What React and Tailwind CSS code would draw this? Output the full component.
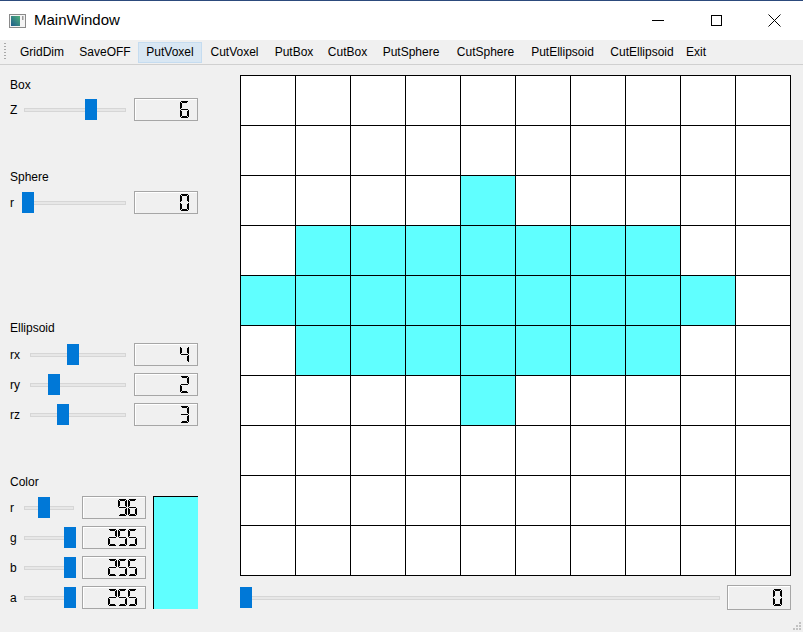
import React from 'react';

// outer line + shorter inner line per segment, gives the thin outlined LCD look
const SEGS = {
  a: ['M1 0.5 H8', 'M2 1.5 H7'],
  b: ['M8.5 1 V8', 'M7.5 2 V7'],
  c: ['M8.5 9 V16', 'M7.5 10 V15'],
  d: ['M1 16.5 H8', 'M2 15.5 H7'],
  e: ['M0.5 9 V16', 'M1.5 10 V15'],
  f: ['M0.5 1 V8', 'M1.5 2 V7'],
  g: ['M1 8.5 H8'],
};

const DIGITS = {
  '0': 'abcdef',
  '1': 'bc',
  '2': 'abged',
  '3': 'abgcd',
  '4': 'fgbc',
  '5': 'afgcd',
  '6': 'afgecd',
  '7': 'abc',
  '8': 'abcdefg',
  '9': 'abcdfg',
};

const Digit = ({ ch }) => (
  <svg width="9" height="17" viewBox="0 0 9 17" shapeRendering="crispEdges">
    {DIGITS[ch].split('').map((s) => (
      <path key={s} d={SEGS[s].join(' ')} fill="none" stroke="#000" strokeWidth="1" />
    ))}
  </svg>
);

const Lcd = ({ value, className = 'h-[23px]' }) => (
  <div className={`w-[64px] ${className} flex items-center justify-end gap-[1px] pr-[8px] border border-[#a6a6a6] shadow-[inset_1px_1px_0_#ffffff] bg-[#f0f0f0] shrink-0`}>
    {String(value).split('').map((ch, i) => (
      <Digit key={i} ch={ch} />
    ))}
  </div>
);

const Slider = ({ value, max, width, className = '' }) => {
  const range = width - 12;
  return (
    <div className={`relative h-[21px] flex items-center shrink-0 ${className}`} style={{ width }}>
      <div className="mx-[2px] flex-1 h-[4px] bg-[#e7e7e7] border border-[#d6d6d6]" />
      <div
        className="absolute top-0 w-[12px] h-[21px] bg-[#0078d7]"
        style={{ left: Math.round((value / max) * range) }}
      />
    </div>
  );
};

const Label = ({ children, className = '' }) => (
  <div className={`h-[16px] leading-[16px] text-[12px] text-black ${className}`}>{children}</div>
);

const ParamRow = ({ label, labelW, value, max, sliderW, lcdGap = 'ml-[6px]' }) => (
  <div className="flex items-center h-[23px]">
    <div className="text-[12px] text-black shrink-0" style={{ width: labelW }}>
      {label}
    </div>
    <Slider value={value} max={max} width={sliderW} />
    <div className={lcdGap}>
      <Lcd value={value} />
    </div>
  </div>
);

const ACTIONS = [
  ['GridDim', 'w-[60px]'],
  ['SaveOFF', 'w-[66px]'],
  ['PutVoxel', 'w-[64px]'],
  ['CutVoxel', 'w-[65px]'],
  ['PutBox', 'w-[54px]'],
  ['CutBox', 'w-[53px]'],
  ['PutSphere', 'w-[74px]'],
  ['CutSphere', 'w-[75px]'],
  ['PutEllipsoid', 'w-[79px]'],
  ['CutEllipsoid', 'w-[80px]'],
  ['Exit', 'w-[28px]'],
];

const FILLED = {
  2: [4],
  3: [1, 2, 3, 4, 5, 6, 7],
  4: [0, 1, 2, 3, 4, 5, 6, 7, 8],
  5: [1, 2, 3, 4, 5, 6, 7],
  6: [4],
};

const App = () => {
  const cells = [];
  for (let r = 0; r < 10; r++) {
    for (let c = 0; c < 10; c++) {
      const on = (FILLED[r] || []).includes(c);
      cells.push(<div key={`${r}-${c}`} className={on ? 'bg-[#60ffff]' : 'bg-white'} />);
    }
  }

  return (
    <div className="w-[803px] h-[632px] bg-[#f0f0f0] flex flex-col relative overflow-hidden font-['Liberation_Sans',Arial,sans-serif]">
      {/* title bar */}
      <div className="h-[40px] bg-white border-t border-[#2c4a7c] flex items-center shrink-0">
        <svg className="ml-[9px]" width="17" height="14" viewBox="0 0 17 14">
          <rect x="0.5" y="0.5" width="16" height="13" fill="#f4f4f4" stroke="#8a8a8a" />
          <defs>
            <linearGradient id="ic" x1="0" y1="1" x2="1" y2="0">
              <stop offset="0" stopColor="#1d5c8c" />
              <stop offset="1" stopColor="#4fb07a" />
            </linearGradient>
          </defs>
          <rect x="2" y="2" width="9" height="10" fill="url(#ic)" />
          <rect x="13" y="2" width="1.5" height="4" fill="#9a9a9a" />
        </svg>
        <div className="ml-[8px] text-[15px] text-black">MainWindow</div>
        <div className="ml-auto flex items-center h-full">
          <div className="w-[58px] h-full flex items-center justify-center">
            <div className="w-[12px] h-px bg-black" />
          </div>
          <div className="w-[58px] h-full flex items-center justify-center">
            <div className="w-[11px] h-[11px] border border-black" />
          </div>
          <div className="w-[58px] h-full flex items-center justify-center">
            <svg width="13" height="13" viewBox="0 0 13 13">
              <path d="M0.5 0.5 L12.5 12.5 M12.5 0.5 L0.5 12.5" stroke="#000" strokeWidth="1" />
            </svg>
          </div>
        </div>
      </div>

      {/* toolbar */}
      <div className="h-[25px] border-b border-[#d0d0d0] flex items-center shrink-0 text-[12px] text-black">
        <div className="ml-[4px] w-[2px] h-[18px] bg-[repeating-linear-gradient(to_bottom,#a8a8a8_0_1px,transparent_1px_3px)]" />
        <div className="ml-[6px] flex items-center">
          {ACTIONS.map(([name, w]) => (
            <div
              key={name}
              className={`${w} h-[21px] flex items-center justify-center ${
                name === 'PutVoxel' ? 'bg-[#d9e7f3] border border-[#c5dcf0]' : ''
              }`}
            >
              {name}
            </div>
          ))}
        </div>
      </div>

      {/* main */}
      <div className="flex flex-1">
        {/* left panel */}
        <div className="w-[240px] pl-[10px] shrink-0 flex flex-col">
          <Label className="mt-[12px]">Box</Label>
          <div className="mt-[5px]">
            <ParamRow label="Z" labelW={12} value={6} max={9} sliderW={106} />
          </div>

          <Label className="mt-[48px]">Sphere</Label>
          <div className="mt-[6px]">
            <ParamRow label="r" labelW={12} value={0} max={9} sliderW={106} />
          </div>

          <Label className="mt-[106px]">Ellipsoid</Label>
          <div className="mt-[7px] flex flex-col gap-[7px]">
            <ParamRow label="rx" labelW={18} value={4} max={9} sliderW={100} />
            <ParamRow label="ry" labelW={18} value={2} max={9} sliderW={100} />
            <ParamRow label="rz" labelW={18} value={3} max={9} sliderW={100} />
          </div>

          <Label className="mt-[48px]">Color</Label>
          <div className="mt-[6px] flex items-start">
            <div className="flex flex-col gap-[7px]">
              <ParamRow label="r" labelW={12} value={96} max={255} sliderW={54} />
              <ParamRow label="g" labelW={12} value={255} max={255} sliderW={54} />
              <ParamRow label="b" labelW={12} value={255} max={255} sliderW={54} />
              <ParamRow label="a" labelW={12} value={255} max={255} sliderW={54} />
            </div>
            <div className="ml-[7px] w-[45px] h-[113px] bg-[#60ffff] border-l border-t border-black" />
          </div>
        </div>

        {/* grid + bottom slider */}
        <div className="flex flex-col pt-[10px]">
          <div className="w-[551px] h-[501px] bg-black p-px grid grid-cols-10 grid-rows-10 gap-px">
            {cells}
          </div>
          <div className="mt-[9px] flex items-center h-[25px]">
            <Slider value={0} max={9} width={482} />
            <div className="ml-[5px]">
              <Lcd value={0} className="h-[25px]" />
            </div>
          </div>
        </div>
      </div>

      {/* size grip */}
      <svg className="absolute right-[1px] bottom-[1px]" width="10" height="10" viewBox="0 0 10 10">
        <rect x="7" y="1" width="2" height="2" fill="#c2c2c2" />
        <rect x="4" y="4" width="2" height="2" fill="#c2c2c2" />
        <rect x="7" y="4" width="2" height="2" fill="#c2c2c2" />
        <rect x="1" y="7" width="2" height="2" fill="#c2c2c2" />
        <rect x="4" y="7" width="2" height="2" fill="#c2c2c2" />
        <rect x="7" y="7" width="2" height="2" fill="#c2c2c2" />
      </svg>
    </div>
  );
};

export default App;
